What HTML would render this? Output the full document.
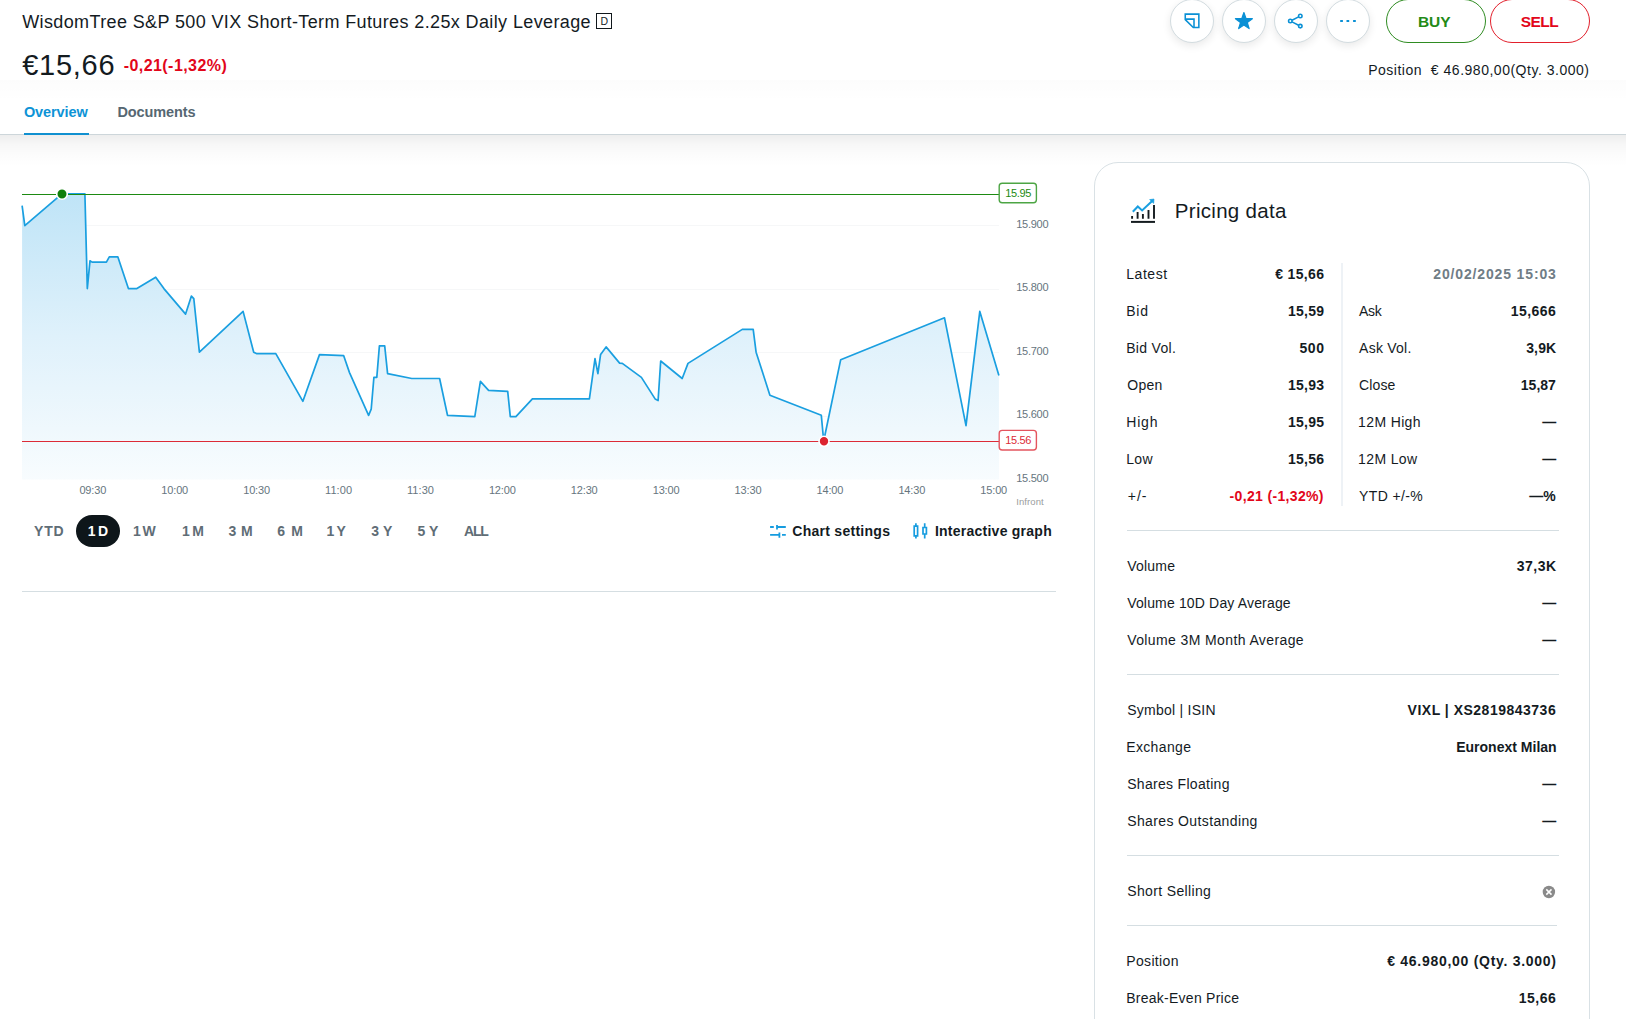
<!DOCTYPE html>
<html>
<head>
<meta charset="utf-8">
<title>WisdomTree S&amp;P 500 VIX Short-Term Futures 2.25x Daily Leverage</title>
<style>
html,body{margin:0;padding:0;}
body{width:1626px;height:1019px;overflow:hidden;background:#fff;position:relative;font-family:"Liberation Sans",sans-serif;color:#141b1f;}
.abs{position:absolute;}
.x{position:absolute;white-space:nowrap;z-index:5;}
#header{position:absolute;left:0;top:0;width:1626px;height:134px;background:#fff;border-bottom:1px solid #cdd6da;z-index:1;}
#hsh{position:absolute;left:0;top:135px;width:1626px;height:32px;background:linear-gradient(to bottom,rgba(0,0,0,0.07) 0,rgba(0,0,0,0.03) 30%,rgba(0,0,0,0.012) 65%,rgba(0,0,0,0) 100%);z-index:1;}
.circ{position:absolute;top:-1px;width:42px;height:42px;border:1px solid #d3dce0;border-radius:50%;background:#fff;box-shadow:0 3px 8px rgba(0,0,0,0.09);z-index:2;}
.pill{position:absolute;top:-1px;height:42px;width:98px;border-radius:22px;border:1px solid;background:#fff;z-index:2;}
#card{position:absolute;left:1094px;top:162px;width:494px;height:900px;border:1px solid #d9e1e5;border-radius:24px;background:#fff;z-index:2;}
.sep{position:absolute;height:1px;background:#d5dee2;z-index:3;}
svg{position:absolute;z-index:4;overflow:visible;}
</style>
</head>
<body>
<div id="header"></div>
<div id="hsh"></div>
<div class="abs" style="left:0;top:80px;width:1626px;height:22px;background:linear-gradient(to bottom,rgba(0,0,0,0.011),rgba(0,0,0,0));z-index:2;"></div>
<div class="abs" style="left:24px;top:133px;width:65px;height:2px;background:#1090d0;z-index:3;"></div>
<div class="abs" style="left:596px;top:13px;width:14px;height:14px;border:1px solid #10171b;z-index:3;"></div>
<div class="circ" style="left:1170px;"></div>
<div class="circ" style="left:1222px;"></div>
<div class="circ" style="left:1274px;"></div>
<div class="circ" style="left:1326px;"></div>
<div class="pill" style="left:1386px;border-color:#2f8c22;"></div>
<div class="pill" style="left:1490px;border-color:#e2202c;"></div>
<svg style="left:1170px;top:0;" width="200" height="44" viewBox="1170 0 200 44" fill="none" stroke="#0a90d5" stroke-width="1.55">
  <path d="M1185.25 14.1H1198.85V27.5H1193.3L1185.25 19.6z" stroke-linejoin="miter"/>
  <path d="M1185.25 19.1H1194V27.5"/>
  <path d="M1243.90 12.50L1245.99 18.52L1252.36 18.65L1247.29 22.50L1249.13 28.60L1243.90 24.96L1238.67 28.60L1240.51 22.50L1235.44 18.65L1241.81 18.52z" fill="#0a90d5" stroke="#0a90d5" stroke-width="1.2" stroke-linejoin="round"/>
  <path d="M1292 20.2L1298.6 16.9M1292 21.9L1298.6 25.2"/>
  <circle cx="1290.3" cy="21.05" r="1.75"/><circle cx="1300.3" cy="16.05" r="1.75"/><circle cx="1300.3" cy="26.1" r="1.75"/>
  <path d="M1340.2 21H1342.9M1346.5 21H1349.2M1353.1 21H1355.8" stroke-width="2.1"/>
</svg>

<svg style="left:0;top:150px;" width="1080" height="360" viewBox="0 150 1080 360">
  <defs>
    <linearGradient id="g" gradientUnits="userSpaceOnUse" x1="0" y1="194" x2="0" y2="480">
      <stop offset="0" stop-color="#bfe4f7"/>
      <stop offset="0.5" stop-color="#dff1fb"/>
      <stop offset="1" stop-color="#f8fcfe"/>
    </linearGradient>
  </defs>
  <g stroke="#f6f7f8" stroke-width="1">
    <line x1="22" y1="225.5" x2="999" y2="225.5"/>
    <line x1="22" y1="289.5" x2="999" y2="289.5"/>
    <line x1="22" y1="352.5" x2="999" y2="352.5"/>
    <line x1="22" y1="416.5" x2="999" y2="416.5"/>
  </g>
  <polygon points="22,479.5 22.1,205.7 24.8,225.6 61.9,193.8 84.9,193.8 87.3,288.6 90.0,260.8 92.1,262.1 106.4,262.1 109.3,256.8 117.8,256.8 128.4,288.6 136.9,288.6 155.7,277.2 163.9,288.6 185.6,314.1 191.4,296.1 193.8,298.7 199.4,352.2 243.1,311.4 253.7,352.2 256.4,353.6 275.8,353.6 302.9,401.3 319.5,354.6 343.7,355.7 349.5,372.6 368.6,415.3 371.2,409.2 373.9,377.4 376.8,377.4 379.4,345.9 384.7,345.9 387.6,373.7 411.8,378.5 439.6,378.5 447.5,415.3 474.8,416.6 480.4,381.4 488.6,390.4 507.7,391.4 510.3,416.6 515.9,416.6 532.4,398.9 589.4,398.9 595.0,358.6 597.9,373.7 600.6,354.4 606.1,346.9 619.6,363.1 622.3,363.4 641.4,377.4 655.1,398.9 658.1,400.5 660.7,361.0 682.2,378.5 688.0,363.4 742.3,329.4 753.2,329.4 756.1,352.2 769.9,395.2 821.3,415.3 823.7,441.0 840.7,359.7 944.5,317.8 966.0,425.6 979.8,311.4 998.9,375.5 999,479.5" fill="url(#g)"/>
  <polyline points="22.1,205.7 24.8,225.6 61.9,193.8 84.9,193.8 87.3,288.6 90.0,260.8 92.1,262.1 106.4,262.1 109.3,256.8 117.8,256.8 128.4,288.6 136.9,288.6 155.7,277.2 163.9,288.6 185.6,314.1 191.4,296.1 193.8,298.7 199.4,352.2 243.1,311.4 253.7,352.2 256.4,353.6 275.8,353.6 302.9,401.3 319.5,354.6 343.7,355.7 349.5,372.6 368.6,415.3 371.2,409.2 373.9,377.4 376.8,377.4 379.4,345.9 384.7,345.9 387.6,373.7 411.8,378.5 439.6,378.5 447.5,415.3 474.8,416.6 480.4,381.4 488.6,390.4 507.7,391.4 510.3,416.6 515.9,416.6 532.4,398.9 589.4,398.9 595.0,358.6 597.9,373.7 600.6,354.4 606.1,346.9 619.6,363.1 622.3,363.4 641.4,377.4 655.1,398.9 658.1,400.5 660.7,361.0 682.2,378.5 688.0,363.4 742.3,329.4 753.2,329.4 756.1,352.2 769.9,395.2 821.3,415.3 823.7,441.0 840.7,359.7 944.5,317.8 966.0,425.6 979.8,311.4 998.9,375.5" fill="none" stroke="#1a9fe0" stroke-width="1.7" stroke-linejoin="round"/>
  <line x1="22" y1="194.5" x2="999" y2="194.5" stroke="#1d8a12" stroke-width="1"/>
  <line x1="22" y1="441.5" x2="999" y2="441.5" stroke="#dc2b37" stroke-width="1"/>
  <circle cx="62" cy="194" r="5.3" fill="#0f7f0a" stroke="#fff" stroke-width="1.6"/>
  <circle cx="824" cy="441.3" r="5" fill="#dc2430" stroke="#fff" stroke-width="1.6"/>
  <rect x="999.2" y="183.2" width="37.2" height="19.6" rx="3" fill="#fff" stroke="#4da544" stroke-width="1.4"/>
  <rect x="999.2" y="430.4" width="37.2" height="19.6" rx="3" fill="#fff" stroke="#e4555f" stroke-width="1.4"/>
</svg>
<div class="abs" style="left:76px;top:515px;width:44px;height:32px;border-radius:16px;background:#0e161a;z-index:3;"></div>
<svg style="left:768px;top:522px;" width="20" height="18" viewBox="768 522 20 18" fill="none" stroke="#169cdf" stroke-width="1.8">
  <path d="M770.1 527h3.7M777 524.9v4.5M777 527h8.8M770.1 534.9h9.3M779.4 532.5v5.2M782 534.9h3.8"/>
</svg>
<svg style="left:910px;top:520px;" width="20" height="22" viewBox="910 520 20 22" fill="none" stroke="#169cdf" stroke-width="1.7">
  <path d="M915.9 523.3v2.9M915.9 535.8v2.8M914.2 526.2h3.4v9.6h-3.4zM924.7 523.3v4.2M924.7 534v4.6M923 527.5h3.4v6.5h-3.4z"/>
</svg>
<div class="sep" style="left:22px;top:591px;width:1034px;"></div>

<div id="card"></div>
<div class="abs" style="left:1341px;top:263px;width:2px;height:243px;background:#eef2f6;z-index:3;"></div>
<div class="sep" style="left:1127px;top:530px;width:432px;"></div>
<div class="sep" style="left:1127px;top:674px;width:432px;"></div>
<div class="sep" style="left:1127px;top:855px;width:432px;"></div>
<div class="sep" style="left:1127px;top:925px;width:430px;"></div>
<svg style="left:1130px;top:197px;" width="28" height="28" viewBox="1130 197 28 28" fill="none">
  <path d="M1131 221.9h24" stroke="#141b1f" stroke-width="2"/>
  <path d="M1132.1 218.7v-2.7M1137.6 218.7v-6.7M1142.9 218.7v-4.7M1148.5 218.7v-8.7M1154 218.7v-13.7" stroke="#141b1f" stroke-width="1.9"/>
  <path d="M1132.8 211.8l5-5.3 4.3 4 9.8-9.3" stroke="#1a9fe0" stroke-width="2"/>
  <path d="M1149.6 199.6l4.4-0.6-0.3 4.4z" fill="#1a9fe0" stroke="#1a9fe0" stroke-width="0.6"/>
</svg>
<svg style="left:1542px;top:885px;" width="14" height="14" viewBox="0 0 14 14"><circle cx="6.9" cy="7" r="6.2" fill="#8a8a8a"/><path d="M4.3 4.4l5.2 5.2M9.5 4.4l-5.2 5.2" stroke="#fff" stroke-width="1.5"/></svg>

<div class="x" style="left:22.20px;top:10.00px;font-size:18px;line-height:24px;color:#141b1f;letter-spacing:0.38px;">WisdomTree S&amp;P 500 VIX Short-Term Futures 2.25x Daily Leverage</div>
<div class="x" style="left:22.20px;top:47.00px;font-size:29px;line-height:36px;color:#141b1f;letter-spacing:0.73px;">€15,66</div>
<div class="x" style="left:600.60px;top:13.00px;font-size:10.5px;line-height:16px;color:#141b1f;">D</div>
<div class="x" style="left:123.70px;top:55.00px;font-size:16px;line-height:21px;color:#e2061a;letter-spacing:0.44px;font-weight:bold;">-0,21(-1,32%)</div>
<div class="x" style="left:23.90px;top:102.00px;font-size:14.5px;line-height:20px;color:#0d93d6;letter-spacing:-0.10px;font-weight:bold;">Overview</div>
<div class="x" style="left:117.50px;top:102.00px;font-size:14.5px;line-height:20px;color:#566772;letter-spacing:-0.12px;font-weight:bold;">Documents</div>
<div class="x" style="left:1417.90px;top:11.00px;font-size:15.5px;line-height:21px;color:#238a16;letter-spacing:0.01px;font-weight:bold;">BUY</div>
<div class="x" style="left:1520.80px;top:11.00px;font-size:15.5px;line-height:21px;color:#e2061a;letter-spacing:-0.55px;font-weight:bold;">SELL</div>
<div class="x" style="left:1368.20px;top:60.00px;font-size:14px;line-height:20px;color:#141b1f;letter-spacing:0.51px;">Position&nbsp; € 46.980,00(Qty. 3.000)</div>
<div class="x" style="left:1005.20px;top:185.00px;font-size:11px;line-height:16px;color:#1d8a12;letter-spacing:-0.35px;">15.95</div>
<div class="x" style="left:1005.20px;top:432.00px;font-size:11px;line-height:16px;color:#dc2b37;letter-spacing:-0.35px;">15.56</div>
<div class="x" style="left:1016.20px;top:216.00px;font-size:11px;line-height:16px;color:#66757e;letter-spacing:-0.25px;">15.900</div>
<div class="x" style="left:1016.20px;top:279.00px;font-size:11px;line-height:16px;color:#66757e;letter-spacing:-0.25px;">15.800</div>
<div class="x" style="left:1016.20px;top:343.00px;font-size:11px;line-height:16px;color:#66757e;letter-spacing:-0.25px;">15.700</div>
<div class="x" style="left:1016.20px;top:406.00px;font-size:11px;line-height:16px;color:#66757e;letter-spacing:-0.25px;">15.600</div>
<div class="x" style="left:1016.20px;top:470.00px;font-size:11px;line-height:16px;color:#66757e;letter-spacing:-0.25px;">15.500</div>
<div class="x" style="left:79.40px;top:482.00px;font-size:11px;line-height:16px;color:#66757e;letter-spacing:-0.15px;">09:30</div>
<div class="x" style="left:161.30px;top:482.00px;font-size:11px;line-height:16px;color:#66757e;letter-spacing:-0.15px;">10:00</div>
<div class="x" style="left:243.20px;top:482.00px;font-size:11px;line-height:16px;color:#66757e;letter-spacing:-0.15px;">10:30</div>
<div class="x" style="left:325.10px;top:482.00px;font-size:11px;line-height:16px;color:#66757e;letter-spacing:0.05px;">11:00</div>
<div class="x" style="left:407.00px;top:482.00px;font-size:11px;line-height:16px;color:#66757e;letter-spacing:0.05px;">11:30</div>
<div class="x" style="left:488.90px;top:482.00px;font-size:11px;line-height:16px;color:#66757e;letter-spacing:-0.15px;">12:00</div>
<div class="x" style="left:570.80px;top:482.00px;font-size:11px;line-height:16px;color:#66757e;letter-spacing:-0.15px;">12:30</div>
<div class="x" style="left:652.70px;top:482.00px;font-size:11px;line-height:16px;color:#66757e;letter-spacing:-0.15px;">13:00</div>
<div class="x" style="left:734.60px;top:482.00px;font-size:11px;line-height:16px;color:#66757e;letter-spacing:-0.15px;">13:30</div>
<div class="x" style="left:816.50px;top:482.00px;font-size:11px;line-height:16px;color:#66757e;letter-spacing:-0.15px;">14:00</div>
<div class="x" style="left:898.40px;top:482.00px;font-size:11px;line-height:16px;color:#66757e;letter-spacing:-0.15px;">14:30</div>
<div class="x" style="left:980.30px;top:482.00px;font-size:11px;line-height:16px;color:#66757e;letter-spacing:-0.15px;">15:00</div>
<div class="x" style="left:1016.20px;top:494.00px;font-size:9.5px;line-height:15px;color:#9a9c9e;letter-spacing:0.10px;">Infront</div>
<div class="x" style="left:34.10px;top:521.00px;font-size:14px;line-height:20px;color:#5f6d76;letter-spacing:0.76px;font-weight:bold;">YTD</div>
<div class="x" style="left:87.80px;top:521.00px;font-size:14px;line-height:20px;color:#fff;letter-spacing:2.41px;font-weight:bold;">1D</div>
<div class="x" style="left:132.90px;top:521.00px;font-size:14px;line-height:20px;color:#5f6d76;letter-spacing:1.81px;font-weight:bold;">1W</div>
<div class="x" style="left:181.90px;top:521.00px;font-size:14px;line-height:20px;color:#5f6d76;letter-spacing:2.51px;font-weight:bold;">1M</div>
<div class="x" style="left:228.40px;top:521.00px;font-size:14px;line-height:20px;color:#5f6d76;letter-spacing:4.91px;font-weight:bold;">3M</div>
<div class="x" style="left:277.30px;top:521.00px;font-size:14px;line-height:20px;color:#5f6d76;letter-spacing:6.11px;font-weight:bold;">6M</div>
<div class="x" style="left:326.50px;top:521.00px;font-size:14px;line-height:20px;color:#5f6d76;letter-spacing:2.11px;font-weight:bold;">1Y</div>
<div class="x" style="left:371.30px;top:521.00px;font-size:14px;line-height:20px;color:#5f6d76;letter-spacing:3.81px;font-weight:bold;">3Y</div>
<div class="x" style="left:417.50px;top:521.00px;font-size:14px;line-height:20px;color:#5f6d76;letter-spacing:3.71px;font-weight:bold;">5Y</div>
<div class="x" style="left:464.00px;top:521.00px;font-size:14px;line-height:20px;color:#5f6d76;letter-spacing:-1.23px;font-weight:bold;">ALL</div>
<div class="x" style="left:792.30px;top:521.00px;font-size:14px;line-height:20px;color:#141b1f;letter-spacing:0.27px;font-weight:bold;">Chart settings</div>
<div class="x" style="left:934.90px;top:521.00px;font-size:14px;line-height:20px;color:#141b1f;letter-spacing:0.25px;font-weight:bold;">Interactive graph</div>
<div class="x" style="left:1174.80px;top:197.00px;font-size:20.5px;line-height:27px;color:#141b1f;letter-spacing:0.30px;">Pricing data</div>
<div class="x" style="left:1126.20px;top:264.00px;font-size:14px;line-height:20px;color:#141b1f;letter-spacing:0.57px;">Latest</div>
<div class="x" style="left:1275.20px;top:264.00px;font-size:14px;line-height:20px;color:#141b1f;letter-spacing:0.35px;font-weight:bold;">€ 15,66</div>
<div class="x" style="left:1126.20px;top:301.00px;font-size:14px;line-height:20px;color:#141b1f;letter-spacing:0.78px;">Bid</div>
<div class="x" style="left:1287.90px;top:301.00px;font-size:14px;line-height:20px;color:#141b1f;letter-spacing:0.26px;font-weight:bold;">15,59</div>
<div class="x" style="left:1126.20px;top:338.00px;font-size:14px;line-height:20px;color:#141b1f;letter-spacing:0.32px;">Bid Vol.</div>
<div class="x" style="left:1299.53px;top:338.00px;font-size:14px;line-height:20px;color:#141b1f;letter-spacing:0.55px;font-weight:bold;">500</div>
<div class="x" style="left:1127.20px;top:375.00px;font-size:14px;line-height:20px;color:#141b1f;letter-spacing:0.31px;">Open</div>
<div class="x" style="left:1287.90px;top:375.00px;font-size:14px;line-height:20px;color:#141b1f;letter-spacing:0.26px;font-weight:bold;">15,93</div>
<div class="x" style="left:1126.20px;top:412.00px;font-size:14px;line-height:20px;color:#141b1f;letter-spacing:0.83px;">High</div>
<div class="x" style="left:1287.90px;top:412.00px;font-size:14px;line-height:20px;color:#141b1f;letter-spacing:0.26px;font-weight:bold;">15,95</div>
<div class="x" style="left:1126.20px;top:449.00px;font-size:14px;line-height:20px;color:#141b1f;letter-spacing:0.31px;">Low</div>
<div class="x" style="left:1287.90px;top:449.00px;font-size:14px;line-height:20px;color:#141b1f;letter-spacing:0.26px;font-weight:bold;">15,56</div>
<div class="x" style="left:1127.80px;top:486.00px;font-size:14px;line-height:20px;color:#141b1f;letter-spacing:0.97px;">+/-</div>
<div class="x" style="left:1229.60px;top:486.00px;font-size:14px;line-height:20px;color:#e2061a;letter-spacing:0.34px;font-weight:bold;">-0,21 (-1,32%)</div>
<div class="x" style="left:1433.30px;top:264.00px;font-size:14px;line-height:20px;color:#707d86;letter-spacing:0.85px;font-weight:bold;">20/02/2025 15:03</div>
<div class="x" style="left:1359.10px;top:301.00px;font-size:14px;line-height:20px;color:#141b1f;letter-spacing:-0.37px;">Ask</div>
<div class="x" style="left:1510.80px;top:301.00px;font-size:14px;line-height:20px;color:#141b1f;letter-spacing:0.45px;font-weight:bold;">15,666</div>
<div class="x" style="left:1359.10px;top:338.00px;font-size:14px;line-height:20px;color:#141b1f;letter-spacing:0.24px;">Ask Vol.</div>
<div class="x" style="left:1526.20px;top:338.00px;font-size:14px;line-height:20px;color:#141b1f;letter-spacing:0.15px;font-weight:bold;">3,9K</div>
<div class="x" style="left:1359.10px;top:375.00px;font-size:14px;line-height:20px;color:#141b1f;letter-spacing:0.10px;">Close</div>
<div class="x" style="left:1520.80px;top:375.00px;font-size:14px;line-height:20px;color:#141b1f;letter-spacing:0.01px;font-weight:bold;">15,87</div>
<div class="x" style="left:1358.10px;top:412.00px;font-size:14px;line-height:20px;color:#141b1f;letter-spacing:0.36px;">12M High</div>
<div class="x" style="left:1542.30px;top:412.00px;font-size:14px;line-height:20px;color:#141b1f;font-weight:bold;">—</div>
<div class="x" style="left:1358.10px;top:449.00px;font-size:14px;line-height:20px;color:#141b1f;letter-spacing:0.36px;">12M Low</div>
<div class="x" style="left:1542.30px;top:449.00px;font-size:14px;line-height:20px;color:#141b1f;font-weight:bold;">—</div>
<div class="x" style="left:1359.10px;top:486.00px;font-size:14px;line-height:20px;color:#141b1f;letter-spacing:0.36px;">YTD +/-%</div>
<div class="x" style="left:1529.30px;top:486.00px;font-size:14px;line-height:20px;color:#141b1f;font-weight:bold;">—%</div>
<div class="x" style="left:1127.20px;top:556.00px;font-size:14px;line-height:20px;color:#141b1f;letter-spacing:0.22px;">Volume</div>
<div class="x" style="left:1516.65px;top:556.00px;font-size:14px;line-height:20px;color:#141b1f;letter-spacing:0.55px;font-weight:bold;">37,3K</div>
<div class="x" style="left:1127.20px;top:593.00px;font-size:14px;line-height:20px;color:#141b1f;letter-spacing:0.16px;">Volume 10D Day Average</div>
<div class="x" style="left:1542.30px;top:593.00px;font-size:14px;line-height:20px;color:#141b1f;font-weight:bold;">—</div>
<div class="x" style="left:1127.20px;top:630.00px;font-size:14px;line-height:20px;color:#141b1f;letter-spacing:0.39px;">Volume 3M Month Average</div>
<div class="x" style="left:1542.30px;top:630.00px;font-size:14px;line-height:20px;color:#141b1f;font-weight:bold;">—</div>
<div class="x" style="left:1127.20px;top:700.00px;font-size:14px;line-height:20px;color:#141b1f;letter-spacing:0.25px;">Symbol | ISIN</div>
<div class="x" style="left:1407.60px;top:700.00px;font-size:14px;line-height:20px;color:#141b1f;letter-spacing:0.50px;font-weight:bold;">VIXL | XS2819843736</div>
<div class="x" style="left:1126.20px;top:737.00px;font-size:14px;line-height:20px;color:#141b1f;letter-spacing:0.36px;">Exchange</div>
<div class="x" style="left:1456.20px;top:737.00px;font-size:14px;line-height:20px;color:#141b1f;letter-spacing:0.01px;font-weight:bold;">Euronext Milan</div>
<div class="x" style="left:1127.20px;top:774.00px;font-size:14px;line-height:20px;color:#141b1f;letter-spacing:0.30px;">Shares Floating</div>
<div class="x" style="left:1542.30px;top:774.00px;font-size:14px;line-height:20px;color:#141b1f;font-weight:bold;">—</div>
<div class="x" style="left:1127.20px;top:811.00px;font-size:14px;line-height:20px;color:#141b1f;letter-spacing:0.38px;">Shares Outstanding</div>
<div class="x" style="left:1542.30px;top:811.00px;font-size:14px;line-height:20px;color:#141b1f;font-weight:bold;">—</div>
<div class="x" style="left:1127.20px;top:881.00px;font-size:14px;line-height:20px;color:#141b1f;letter-spacing:0.36px;">Short Selling</div>
<div class="x" style="left:1126.20px;top:951.00px;font-size:14px;line-height:20px;color:#141b1f;letter-spacing:0.36px;">Position</div>
<div class="x" style="left:1387.20px;top:951.00px;font-size:14px;line-height:20px;color:#141b1f;letter-spacing:0.72px;font-weight:bold;">€ 46.980,00 (Qty. 3.000)</div>
<div class="x" style="left:1126.20px;top:988.00px;font-size:14px;line-height:20px;color:#141b1f;letter-spacing:0.26px;">Break-Even Price</div>
<div class="x" style="left:1518.65px;top:988.00px;font-size:14px;line-height:20px;color:#141b1f;letter-spacing:0.55px;font-weight:bold;">15,66</div>

</body>
</html>
